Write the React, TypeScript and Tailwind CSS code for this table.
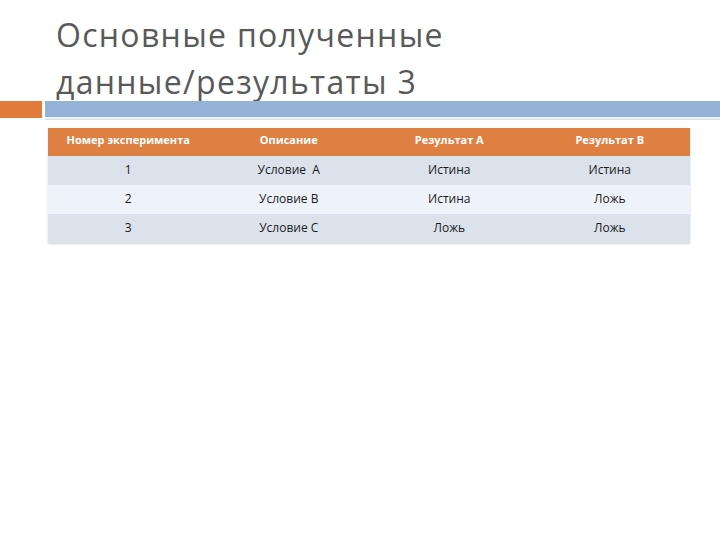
const headers = ['Номер эксперимента', 'Описание', 'Результат А', 'Результат В'];

const rows = [
  ['1', 'Условие  А', 'Истина', 'Истина'],
  ['2', 'Условие В', 'Истина', 'Ложь'],
  ['3', 'Условие С', 'Ложь', 'Ложь'],
];

export default function App() {
  return (
    <div
      className="w-[720px] h-[540px] bg-white overflow-hidden"
      style={{ fontFamily: '"Open Sans", "Liberation Sans", sans-serif' }}
    >
      <div className="h-[91px] pt-[11px] pl-[56px]">
        <h1 className="text-[32px] leading-[47px] text-[#595959] tracking-[1.3px] font-normal whitespace-nowrap">
          Основные полученные
          <br />
          данные/результаты 3
        </h1>
      </div>

      <div className="flex items-start gap-[3px] mt-[10px]">
        <div className="w-[42px] h-[17px] bg-[#e07b3c]" />
        <div className="flex-1 flex flex-col">
          <div className="h-[16px] bg-[#95b3d7]" />
          <div className="h-[2px] bg-[#eaf6fb]" />
          <div className="h-px bg-[#d9dde2]" />
        </div>
      </div>

      <div className="ml-[48px] mt-[8px] w-[642px] shadow-[0_1px_2px_rgba(0,0,0,0.18)]">
        <div className="grid grid-cols-4 h-[28px] items-center pb-[4px] bg-[#df8043] text-white text-[11px] font-bold">
          {headers.map((h) => (
            <div key={h} className="text-center whitespace-nowrap">
              {h}
            </div>
          ))}
        </div>
        {rows.map((r, i) => (
          <div
            key={r[0]}
            className={
              'grid grid-cols-4 h-[29px] items-center pb-[2px] text-[12px] text-[#1a1a1a] ' +
              (i % 2 === 0 ? 'bg-[#dbe2eb]' : 'bg-[#eef2f9]')
            }
          >
            {r.map((c, j) => (
              <div key={j} className="text-center whitespace-pre">
                {c}
              </div>
            ))}
          </div>
        ))}
      </div>
    </div>
  );
}
